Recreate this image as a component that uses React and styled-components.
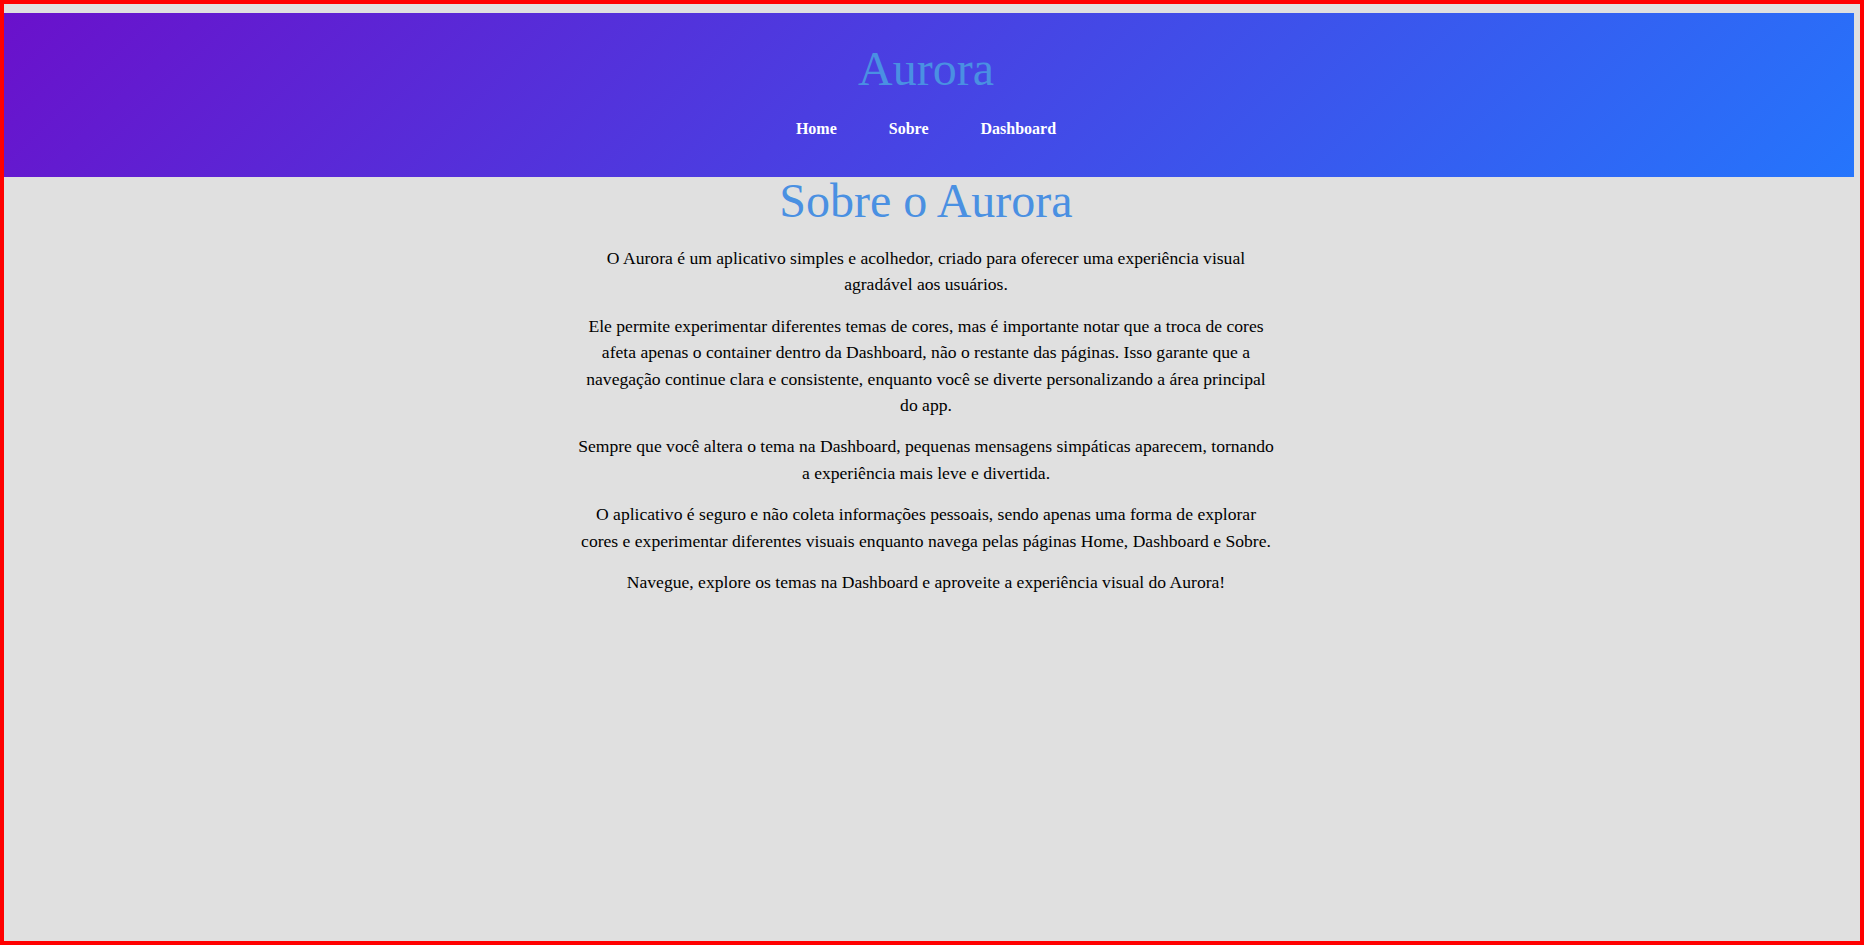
import React from 'react';
import styled, { createGlobalStyle } from 'styled-components';

const GlobalStyle = createGlobalStyle`
  html, body {
    margin: 0;
    padding: 0;
    background: #e0e0e0;
  }
  body {
    font-family: 'Liberation Serif', 'Times New Roman', serif;
    color: #000;
  }
`;

const Frame = styled.div`
  box-sizing: border-box;
  height: 100vh;
  border: 4px solid #ff0000;
  background: #e0e0e0;
  padding: 9px 6px 0 0;
  overflow: hidden;
`;

const Header = styled.header`
  padding: 28px 6px 39px 0;
  background: linear-gradient(135deg, #6a11cb 0%, #2575fc 100%);
  text-align: center;
`;

const Logo = styled.h1`
  margin: 0 0 24px;
  font-size: 48px;
  font-weight: normal;
  color: #4a90e2;
`;

const NavList = styled.ul`
  list-style: none;
  margin: 0;
  padding: 0;
  display: flex;
  justify-content: center;
  gap: 52px;
`;

const NavLink = styled.a`
  color: #fff;
  font-weight: bold;
  font-size: 16px;
  text-decoration: none;
`;

const Main = styled.main`
  padding-right: 6px;
`;

const Content = styled.section`
  max-width: 700px;
  margin: 0 auto;
  text-align: center;
`;

const Title = styled.h2`
  margin: 0 0 20px;
  font-size: 48px;
  line-height: 1;
  font-weight: normal;
  color: #4a90e2;
`;

const Paragraph = styled.p`
  margin: 15px 0;
  font-size: 17.6px;
  line-height: 1.5;
`;

const links = ['Home', 'Sobre', 'Dashboard'];

const paragraphs = [
  'O Aurora é um aplicativo simples e acolhedor, criado para oferecer uma experiência visual agradável aos usuários.',
  'Ele permite experimentar diferentes temas de cores, mas é importante notar que a troca de cores afeta apenas o container dentro da Dashboard, não o restante das páginas. Isso garante que a navegação continue clara e consistente, enquanto você se diverte personalizando a área principal do app.',
  'Sempre que você altera o tema na Dashboard, pequenas mensagens simpáticas aparecem, tornando a experiência mais leve e divertida.',
  'O aplicativo é seguro e não coleta informações pessoais, sendo apenas uma forma de explorar cores e experimentar diferentes visuais enquanto navega pelas páginas Home, Dashboard e Sobre.',
  'Navegue, explore os temas na Dashboard e aproveite a experiência visual do Aurora!',
];

export default function App() {
  return (
    <>
      <GlobalStyle />
      <Frame>
        <Header>
          <Logo>Aurora</Logo>
          <nav>
            <NavList>
              {links.map((l) => (
                <li key={l}>
                  <NavLink href="#">{l}</NavLink>
                </li>
              ))}
            </NavList>
          </nav>
        </Header>
        <Main>
          <Content>
            <Title>Sobre o Aurora</Title>
            {paragraphs.map((p, i) => (
              <Paragraph key={i}>{p}</Paragraph>
            ))}
          </Content>
        </Main>
      </Frame>
    </>
  );
}
